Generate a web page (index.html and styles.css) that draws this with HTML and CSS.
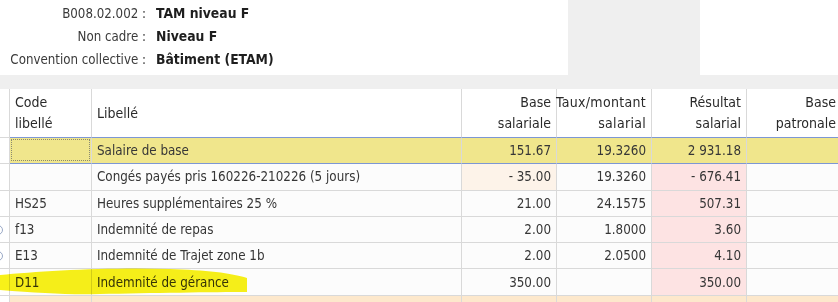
FILE: index.html
```html
<!DOCTYPE html>
<html lang="fr">
<head>
<meta charset="utf-8">
<title>Bulletin</title>
<link rel="stylesheet" href="styles.css">
</head>
<body>
<div class="page">
  <div class="info">
    <div class="info-fields">
      <div class="lbl">B008.02.002 :</div><div class="val">TAM niveau F</div>
      <div class="lbl">Non cadre :</div><div class="val">Niveau F</div>
      <div class="lbl">Convention collective :</div><div class="val">Bâtiment (ETAM)</div>
    </div>
    <div class="info-panel"></div>
    <div class="info-rest"></div>
  </div>
  <div class="band"></div>
  <div class="table">
    <div class="row head">
      <div class="c c0"></div>
      <div class="c c1 hl"><span>Code</span><span>libellé</span></div>
      <div class="c c2 hl"><span>Libellé</span></div>
      <div class="c c3 hr"><span>Base</span><span>salariale</span></div>
      <div class="c c4 hr"><span>Taux/montant</span><span>salarial</span></div>
      <div class="c c5 hr"><span>Résultat</span><span>salarial</span></div>
      <div class="c c6 hr"><span>Base</span><span>patronale</span></div>
    </div>
    <div class="row sel">
      <div class="c c0"></div>
      <div class="c c1"><span class="focus"></span></div>
      <div class="c c2">Salaire de base</div>
      <div class="c c3 n">151.67</div>
      <div class="c c4 n">19.3260</div>
      <div class="c c5 n">2 931.18</div>
      <div class="c c6 n"></div>
    </div>
    <div class="row">
      <div class="c c0"></div>
      <div class="c c1"></div>
      <div class="c c2">Congés payés pris 160226-210226 (5 jours)</div>
      <div class="c c3 n peach">- 35.00</div>
      <div class="c c4 n">19.3260</div>
      <div class="c c5 n pink">- 676.41</div>
      <div class="c c6 n"></div>
    </div>
    <div class="row">
      <div class="c c0"></div>
      <div class="c c1">HS25</div>
      <div class="c c2">Heures supplémentaires 25 %</div>
      <div class="c c3 n">21.00</div>
      <div class="c c4 n">24.1575</div>
      <div class="c c5 n pink">507.31</div>
      <div class="c c6 n"></div>
    </div>
    <div class="row">
      <div class="c c0"><span class="ring"></span></div>
      <div class="c c1">f13</div>
      <div class="c c2">Indemnité de repas</div>
      <div class="c c3 n">2.00</div>
      <div class="c c4 n">1.8000</div>
      <div class="c c5 n pink">3.60</div>
      <div class="c c6 n"></div>
    </div>
    <div class="row">
      <div class="c c0"><span class="ring"></span></div>
      <div class="c c1">E13</div>
      <div class="c c2">Indemnité de Trajet zone 1b</div>
      <div class="c c3 n">2.00</div>
      <div class="c c4 n">2.0500</div>
      <div class="c c5 n pink">4.10</div>
      <div class="c c6 n"></div>
    </div>
    <div class="row">
      <div class="c c0"></div>
      <div class="c c1">D11</div>
      <div class="c c2">Indemnité de gérance</div>
      <div class="c c3 n">350.00</div>
      <div class="c c4 n"></div>
      <div class="c c5 n pink">350.00</div>
      <div class="c c6 n"></div>
    </div>
    <div class="row orange">
      <div class="c c0"></div>
      <div class="c c1"></div>
      <div class="c c2"></div>
      <div class="c c3"></div>
      <div class="c c4"></div>
      <div class="c c5"></div>
      <div class="c c6"></div>
    </div>
    <svg class="marker" width="260" height="40" viewBox="0 0 260 40" aria-hidden="true">
      <path d="M0,9 C40,5 110,1 170,3 C205,4 232,7 247,12 L247,26 C215,26 150,27 100,28 C70,29 40,27 0,24 Z" fill="#f8f000"/>
    </svg>
  </div>
</div>
</body>
</html>
```
FILE: styles.css
```css
* { box-sizing: border-box; }
html, body { margin: 0; padding: 0; background: #ffffff; }
.page {
  width: 838px;
  height: 302px;
  overflow: hidden;
  font-family: "DejaVu Sans Condensed", "DejaVu Sans", sans-serif;
  font-stretch: condensed;
  color: #333;
}
.info {
  display: flex;
  height: 75px;
}
.info-fields {
  width: 568px;
  display: grid;
  grid-template-columns: 148px auto;
  grid-auto-rows: 23px;
  align-content: start;
  padding-top: 2px;
  line-height: 23px;
}
.lbl { text-align: right; color: #3a3a3a; padding-right: 2px; font-size: 13.2px; }
.val { font-weight: bold; color: #1e1e1e; padding-left: 8px; font-size: 13.8px; }
.info-panel { width: 132px; background: #efefef; }
.info-rest { flex: 1; }
.band { height: 14px; background: #efefef; }

.table { position: relative; }
.row {
  display: grid;
  grid-template-columns: 10px 82px 370px 95px 95px 95px 95px;
  height: 26.3px;
  font-size: 13.3px;
}
.c {
  border-right: 1px solid #d9d9d9;
  border-bottom: 1px solid #d9d9d9;
  background: #fcfcfc;
  padding: 0 5px;
  display: flex;
  align-items: center;
  white-space: nowrap;
  color: #363636;
}
.c0 { padding: 0; background: #ffffff; overflow: hidden; }
.n { justify-content: flex-end; }

.head { height: 49px; font-size: 14px; }
.head .c {
  background: #ffffff;
  flex-direction: column;
  justify-content: center;
  line-height: 21px;
  color: #2a2a2a;
  border-bottom-color: #7d97d4;
}
.head .c0 { border-bottom-color: #d9d9d9; }
.head .hl { align-items: flex-start; }
.head .hr { align-items: flex-end; }
.head .c4 { letter-spacing: 0.3px; }

.sel .c { background: #f0e68c; border-bottom-color: #7d97d4; }
.sel .c0 { background: #ffffff; border-bottom-color: #d9d9d9; }
.sel .c1 { padding: 1px 1px 2px 1px; }
.focus {
  display: block;
  width: 100%;
  height: 100%;
  border: 1px dotted #8a8a70;
}

.peach { background: #fdf3e9; }
.pink { background: #fde3e3; }
.orange .c { background: #fde8cc; }
.orange .c0 { background: #ffffff; }

.ring {
  display: block;
  width: 10px;
  height: 10px;
  margin-left: -7px;
  border: 1px solid #9aa9c6;
  border-radius: 50%;
}

.marker {
  position: absolute;
  left: 0;
  top: 177px;
  mix-blend-mode: multiply;
  opacity: 0.9;
  pointer-events: none;
}
```
